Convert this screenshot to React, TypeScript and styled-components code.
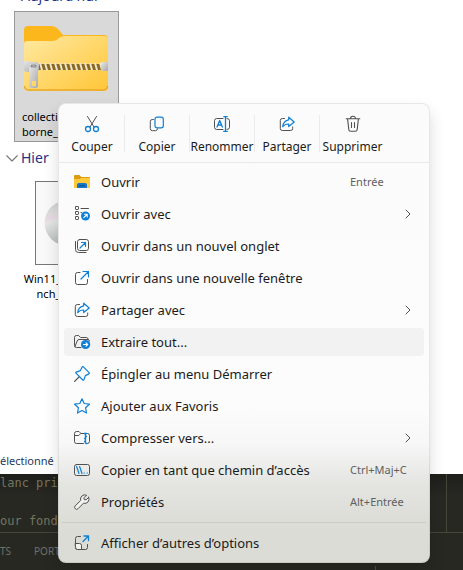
import React from "react";
import styled, { createGlobalStyle } from "styled-components";

const ink = "#505050";
const blue = "#0f7fd6";

const GlobalStyle = createGlobalStyle`
  * { box-sizing: border-box; }
  body {
    margin: 0;
    overflow: hidden;
    background: #fff;
    font-family: "Noto Sans", "Open Sans", sans-serif;
    color: #1b1b1b;
  }
  button { font: inherit; color: inherit; border: 0; padding: 0; background: none; }
`;

const Desktop = styled.div`
  position: relative;
  display: grid;
  grid-template-rows: 1fr auto;
  height: 100vh;
`;

const Explorer = styled.main`
  display: flex;
  flex-direction: column;
  min-height: 0;
  overflow: hidden;
  background: #fff;
`;

const ScrolledHeading = styled.div`
  display: flex;
  align-items: flex-end;
  height: 11px;
  padding: 0 0 5px 21px;
`;

const Heading = styled.h2`
  margin: 0;
  font-size: 14px;
  line-height: 20px;
  font-weight: 400;
  color: #1e3287;
`;

const GroupHeader = styled.div`
  display: flex;
  align-items: center;
  gap: 3px;
  height: 31px;
  padding-left: 6px;
`;

const Tile = styled.figure<{ $selected?: boolean }>`
  display: flex;
  flex-direction: column;
  align-items: center;
  width: 105px;
  height: 131px;
  margin: 0 0 0 14px;
  border: 1px solid ${(p) => (p.$selected ? "#999" : "transparent")};
  background: ${(p) => (p.$selected ? "#d9d9d9" : "transparent")};
`;

const FolderArt = styled.svg`
  flex: none;
  width: 86px;
  height: 70px;
  margin: 12px 0 15px;
`;

const FileName = styled.figcaption<{ $align: "left" | "center" }>`
  width: 89px;
  font-size: 11px;
  line-height: 15px;
  text-align: ${(p) => p.$align};
  color: #000;
`;

const DiscFrame = styled.div`
  display: flex;
  align-items: center;
  justify-content: center;
  flex: none;
  width: 64px;
  height: 84px;
  margin: 7px 0 6px;
  border: 1px solid #777;
  background: #f9f9f9;
`;

const StatusBar = styled.footer`
  margin-top: auto;
  height: 25px;
  font-size: 11px;
  line-height: 24px;
  color: #1e395b;
`;

const Editor = styled.section`
  display: flex;
  flex-direction: column;
  height: 96px;
  overflow: hidden;
  background: #272822;
  color: #75745f;
`;

const CodeArea = styled.div`
  display: flex;
  justify-content: space-between;
  height: 59px;
  background: linear-gradient(#1e1f1b, #272822 22px);
  border-bottom: 1px solid #45463a;
`;

const Code = styled.pre`
  margin: 0;
  font-family: "DejaVu Sans Mono", monospace;
  font-size: 12px;
  line-height: 19px;
`;

const Minimap = styled.div`
  width: 17px;
  border-left: 1px solid #45463a;
`;

const PanelTabs = styled.div`
  display: flex;
  gap: 23px;
  height: 37px;
  font-size: 10px;
  line-height: 36px;
  color: #71716a;
`;

const PanelDivider = styled.div`
  align-self: flex-end;
  width: 1px;
  height: 4px;
  margin: 0 87px 0 auto;
  background: #4b4c43;
`;

const Menu = styled.div`
  position: absolute;
  top: 103px;
  left: 58px;
  right: 33px;
  overflow: hidden;
  border: 1px solid rgba(0, 0, 0, 0.08);
  border-radius: 8px;
  background: linear-gradient(#fbfbfb, #fcfcfc 66%, #f7f7f7 74%, #e4e5e1 83%, #dcddd7 91%, #dadbd4) border-box;
  box-shadow: 0 8px 16px rgba(0, 0, 0, 0.14);
`;

const Toolbar = styled.div`
  display: flex;
  align-items: center;
  height: 59px;
  padding-left: 1px;
  border-bottom: 1px solid #e9e9e9;
`;

const ToolButton = styled.button`
  display: flex;
  flex-direction: column;
  align-items: center;
  justify-content: center;
  gap: 7px;
  width: 65px;
  height: 37px;
  padding-top: 4px;
  font-size: 12px;
  line-height: 16px;
  white-space: nowrap;
  &:not(:last-child) { border-right: 1px solid #ebebeb; }
`;

const Rows = styled.div`
  display: flex;
  flex-direction: column;
  gap: 4px;
  padding: 5px;
`;

const Row = styled.button<{ $active?: boolean }>`
  display: grid;
  grid-template-columns: 16px 1fr auto;
  align-items: center;
  gap: 11px;
  height: 28px;
  padding: 0 12px 0 10px;
  border-radius: 4px;
  background: ${(p) => (p.$active ? "#f2f2f2" : "transparent")};
  font-size: 13px;
  line-height: 20px;
  text-align: left;
  white-space: nowrap;
`;

const Shortcut = styled.span`
  width: 62px;
  font-size: 11px;
  color: #606060;
`;

const Separator = styled.hr`
  width: auto;
  height: 1px;
  margin: 2px -2px;
  border: 0;
  background: #cbccc6;
`;

const IconSvg = styled.svg<{ $size: number }>`
  display: block;
  flex: none;
  width: ${(p) => p.$size}px;
  height: ${(p) => p.$size}px;
  fill: none;
  stroke: ${ink};
  stroke-linecap: round;
  stroke-linejoin: round;
  overflow: visible;
`;

function Icon({ children, size = 16 }: { children: React.ReactNode; size?: number }) {
  return <IconSvg viewBox="0 0 16 16" $size={size} aria-hidden="true">{children}</IconSvg>;
}

const icons = {
  cut: <Icon><path d="M3.5.5 10 11M12.5.5 6 11" /><g stroke={blue} strokeWidth="1.3"><circle cx="4" cy="13" r="2.5" /><circle cx="12" cy="13" r="2.5" /></g></Icon>,
  copy: <Icon><path d="M4.5 3.5H3.2A2 2 0 0 0 1.3 5.5v7a2.2 2.2 0 0 0 2.2 2.2h3a2 2 0 0 0 2-1.8" /><rect x="6" y="1.2" width="8.3" height="10.6" rx="2" stroke={blue} strokeWidth="1.2" /></Icon>,
  rename: <Icon><path d="M9 2.5H2.7A2.2 2.2 0 0 0 .5 4.7v6.6a2.2 2.2 0 0 0 2.2 2.2H9M13 2.5a2.4 2.4 0 0 1 2.5 2.2v6.6a2.4 2.4 0 0 1-2.5 2.2" /><path d="M3 11 5.7 4.5 8.4 11M3.9 9h3.6M11.5.6v14.8M9.8.6h3.4M9.8 15.4h3.4" stroke={blue} strokeWidth="1.3" /></Icon>,
  share: <Icon><path d="M5.5 2.5H3.3a2 2 0 0 0-2 2v8a2 2 0 0 0 2 2h8.4a2 2 0 0 0 2-2V11" /><path d="M9.7 1.2 15.2 6 9.7 10.5V8C7 8 5.2 8.8 3.7 10.7 4.2 6.5 6.6 4.2 9.7 3.8z" stroke={blue} strokeWidth="1.2" /></Icon>,
  trash: <Icon><path d="M1.2 2.7h13.6M5.5 2.5a2.5 2.2 0 0 1 5 0M2.6 2.9l1.2 10.6a1.9 1.9 0 0 0 1.9 1.8h4.6a1.9 1.9 0 0 0 1.9-1.8l1.2-10.6M6.5 6.5v5M9.5 6.5v5" strokeWidth="1.1" /></Icon>,
  open: <Icon><g stroke="none"><path d="M0 2a1 1 0 0 1 1-1h4.5L7.3 3H15a1 1 0 0 1 1 1v10H0z" fill="#dc9c12" /><path d="M0 5h5.5l2-1H16v10H0z" fill="#ffc93c" /><path d="M3 14v-3.200A1.800 1.800 0 0 1 4.800 9h6.400a1.800 1.800 0 0 1 1.800 1.800V14z" fill="#1477c9" /><path d="M5 11.300h6v1H5z" fill="#0a4a84" /></g></Icon>,
  openWith: <Icon><rect x="1.5" y=".5" width="3" height="3" rx=".6" /><rect x="1.5" y="5.500" width="3" height="3" rx=".6" /><rect x="1.5" y="10.500" width="3" height="3" rx=".6" /><path d="M7 2.500h7.500M7 6.500h.5" /><circle cx="11.5" cy="10" r="4.5" fill={blue} stroke="none" /><path d="M9.800 11.700 13 8.500M10.500 8.300h2.700V11" stroke="#fff" strokeWidth="1.100" /></Icon>,
  tab: <Icon><rect x="3.500" y="1.500" width="11" height="11" rx="2.200" /><path d="M1.500 3.500v8a3 3 0 0 0 3 3h7.500" /><path d="M6 10 11.500 4.500M7.500 4.500h4v4" stroke={blue} strokeWidth="1.200" /></Icon>,
  window: <Icon><path d="M6 2.500H3.500a2 2 0 0 0-2 2v8a2 2 0 0 0 2 2h8a2 2 0 0 0 2-2V9.500" /><path d="M7 9 14.500 1.500M9 1.500h5.500V7" stroke={blue} strokeWidth="1.200" /></Icon>,
  extract: <Icon><path d="M7 13.5H2.4A1.9 1.9 0 0 1 .5 11.6V3.4A1.9 1.9 0 0 1 2.4 1.5h2.2l2 2h5.7a1.9 1.9 0 0 1 1.9 1.9M1 12.5 3.2 7a2 2 0 0 1 1.800-1.500h9a1.500 1.500 0 0 1 1.400 1.600" /><circle cx="11.6" cy="10.5" r="4.6" fill={blue} stroke="none" /><path d="M9.500 10.500h4M12 8.800l1.700 1.700-1.700 1.700" stroke="#fff" strokeWidth="1.200" /></Icon>,
  pin: <Icon><path d="M5 11 .6 15.4" strokeWidth="1.2" /><path d="M9.4.9 15.1 6.6c.5.5.3 1-.3 1.3l-3.4 1.7-1.5 4.2c-.2.5-.7.6-1.1.2L2 7.2c-.4-.4-.3-.9.2-1.1l4.2-1.5L8.1 1.2C8.4.6 8.9.4 9.4.9z" stroke={blue} strokeWidth="1.2" /></Icon>,
  star: <Icon><path d="m8 .8 2.2 4.7 5.2.7-3.8 3.6.9 5.200L8 12.500 3.500 15l.9-5.200L.6 6.200l5.200-.7z" stroke={blue} strokeWidth="1.2" /></Icon>,
  zip: <Icon><path d="M.5 5.500h4.300l2-2M9.500 13.500H2.500a2 2 0 0 1-2-2V3.500a2 2 0 0 1 2-2h2.500l2 2h6.500a2 2 0 0 1 2 2v6a2 2 0 0 1-2 2" /><path d="M11.500 3.500v10M10 3.500h3M11.500 6.500H13M10 8.500h1.500M10 11.500h1.500M11.500 13.500H13" stroke={blue} strokeWidth="1.300" strokeLinecap="butt" /></Icon>,
  path: <Icon><rect x=".5" y="2.5" width="15" height="11" rx="2" /><path d="M2.600 4.500 5 11.500M5.600 4.500 8 11.500M10 11h.4M13 11h.4" stroke={blue} strokeWidth="1.2" /></Icon>,
  wrench: <Icon><path d="M14.700 3.300 12.200 5.800 10.200 5.600 10 3.700 12.500 1.200A4.300 4.300 0 0 0 6.700 6.400L1.200 11.900a1.900 1.900 0 0 0 2.800 2.800L9.500 9.200a4.300 4.300 0 0 0 5.200-5.900z" fill="#f2f2ee" /></Icon>,
  more: <Icon><path d="M6.500 1.500H3.500a2 2 0 0 0-2 2v9a2 2 0 0 0 2 2h8a2 2 0 0 0 2-2V9.500" /><path d="M1.500 8.500h4a2 2 0 0 1 2 2v4h-4a2 2 0 0 1-2-2z" fill="#f2f2ee" /><path d="M9 6.500 14.500 1M10 1h4.500v4.500" stroke={blue} strokeWidth="1.3" /></Icon>,
};

const tools = [
  { label: "Couper", icon: icons.cut },
  { label: "Copier", icon: icons.copy },
  { label: "Renommer", icon: icons.rename },
  { label: "Partager", icon: icons.share },
  { label: "Supprimer", icon: icons.trash },
];

type Item = { label: string; icon: React.ReactNode; shortcut?: string; submenu?: boolean; active?: boolean };

const items: Item[] = [
  { label: "Ouvrir", icon: icons.open, shortcut: "Entrée" },
  { label: "Ouvrir avec", icon: icons.openWith, submenu: true },
  { label: "Ouvrir dans un nouvel onglet", icon: icons.tab },
  { label: "Ouvrir dans une nouvelle fenêtre", icon: icons.window },
  { label: "Partager avec", icon: icons.share, submenu: true },
  { label: "Extraire tout...", icon: icons.extract, active: true },
  { label: "Épingler au menu Démarrer", icon: icons.pin },
  { label: "Ajouter aux Favoris", icon: icons.star },
  { label: "Compresser vers...", icon: icons.zip, submenu: true },
  { label: "Copier en tant que chemin d’accès", icon: icons.path, shortcut: "Ctrl+Maj+C" },
  { label: "Propriétés", icon: icons.wrench, shortcut: "Alt+Entrée" },
];

function ZipFolder() {
  const teeth = Array.from({ length: 13 }, (_, i) => 15 + i * 5);
  return (
    <FolderArt viewBox="0 0 86 70" aria-hidden="true">
      <defs>
        <linearGradient id="front" x1="0" y1="0" x2="1" y2="1">
          <stop offset="0" stopColor="#ffe9a2" /><stop offset="1" stopColor="#ffc636" />
        </linearGradient>
        <linearGradient id="metal" x1="0" y1="0" x2="1" y2="1">
          <stop offset="0" stopColor="#e8e8e8" /><stop offset="1" stopColor="#a9a9a9" />
        </linearGradient>
      </defs>
      <path d="M0 6a4 4 0 0 1 4-4h23c3 0 5 1 7 3l5 6h41a4 4 0 0 1 4 4v10H0z" fill="#fbb71c" />
      <path d="M0 20a3 3 0 0 1 3-3h25c3 0 5-1 7-3l2-1c1-.8 2-1 4-1h39a4 4 0 0 1 4 4V63a4 4 0 0 1-4 4H4a4 4 0 0 1-4-4z" fill="url(#front)" />
      <path d="M.5 62a4 4 0 0 0 4 4h75a4 4 0 0 0 4-4" fill="none" stroke="#e9a82a" strokeWidth="1.5" />
      <path d="M14 40h64v6H14z" fill="#8a6a20" />
      {teeth.map((x) => <path key={x} d={`M${x} 39h2l2 7h-2z`} fill="#eee6cf" />)}
      <rect x="77" y="38" width="7" height="9" fill="url(#metal)" />
      <path d="M-1 37h5l3 1h6l2 2v6l-2 2H4l-5-1z" fill="url(#metal)" />
      <path fillRule="evenodd" d="M6 40h8v22a2 2 0 0 1-2 2H7a2 2 0 0 1-2-2V46zM8 57v5h4v-5z" fill="url(#metal)" />
      <path d="M7 41h5v2H7z" fill="#b8b8b8" stroke="#777" strokeWidth=".7" />
    </FolderArt>
  );
}

export default function App() {
  return (
    <>
      <GlobalStyle />
      <Desktop>
        <Explorer>
          <ScrolledHeading><Heading>Aujourd'hui</Heading></ScrolledHeading>
          <Tile $selected>
            <ZipFolder />
            <FileName $align="left">collecti<br />borne_</FileName>
          </Tile>
          <GroupHeader>
            <Icon size={12}><path d="m1 5 7 7 7-7" stroke="#777" strokeWidth="1.5" /></Icon>
            <Heading>Hier</Heading>
          </GroupHeader>
          <Tile>
            <DiscFrame>
              <svg width="46" height="46" viewBox="0 0 46 46" aria-hidden="true">
                <defs>
                  <linearGradient id="disc" x1="0" y1="0" x2=".2" y2="1">
                    <stop offset="0" stopColor="#c9cccc" /><stop offset=".3" stopColor="#dedede" />
                    <stop offset=".4" stopColor="#ead9e6" /><stop offset=".5" stopColor="#e4e7e5" />
                    <stop offset="1" stopColor="#b5baba" />
                  </linearGradient>
                </defs>
                <circle cx="23" cy="23" r="22.5" fill="url(#disc)" />
                <circle cx="23" cy="23" r="5" fill="#fff" />
              </svg>
            </DiscFrame>
            <FileName $align="center">Win11_24H2_Fre<br />nch_x64.iso</FileName>
          </Tile>
          <StatusBar>électionné</StatusBar>
        </Explorer>
        <Editor>
          <CodeArea>
            <Code>{"lanc pri\n\nour fond"}</Code>
            <Minimap />
          </CodeArea>
          <PanelTabs><span>TS</span><span>PORTS</span><PanelDivider /></PanelTabs>
        </Editor>
        <Menu role="menu">
          <Toolbar>
            {tools.map((t) => <ToolButton key={t.label}>{t.icon}{t.label}</ToolButton>)}
          </Toolbar>
          <Rows>
            {items.map((it) => (
              <Row key={it.label} role="menuitem" $active={it.active}>
                {it.icon}
                <span>{it.label}</span>
                {it.shortcut && <Shortcut>{it.shortcut}</Shortcut>}
                {it.submenu && <Icon size={8}><path d="m4 0 8 8-8 8" strokeWidth="2" /></Icon>}
              </Row>
            ))}
            <Separator />
            <Row role="menuitem">{icons.more}<span>Afficher d’autres d’options</span></Row>
          </Rows>
        </Menu>
      </Desktop>
    </>
  );
}
